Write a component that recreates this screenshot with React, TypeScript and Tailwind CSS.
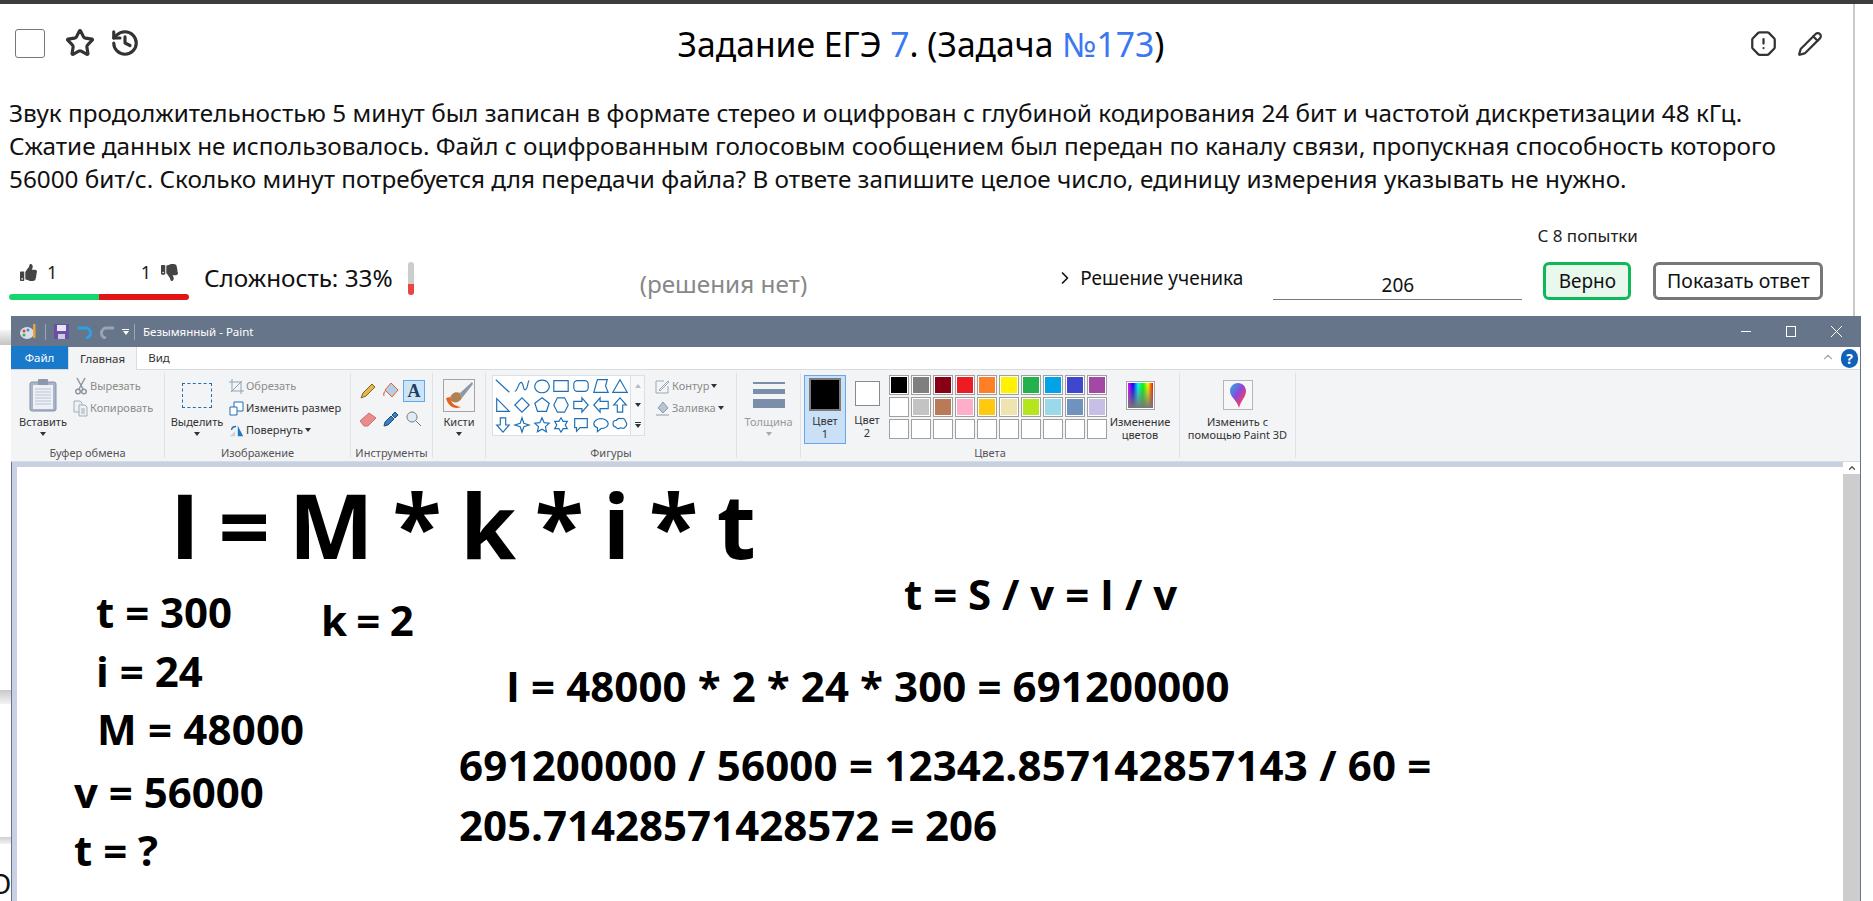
import { ChevronRight, ChevronUp, History, OctagonAlert, Pencil, Star } from "lucide-react";
import type { ReactNode } from "react";
import { FaThumbsDown, FaThumbsUp } from "react-icons/fa";

const PALETTE = [
	["#000000", "#7f7f7f", "#880015", "#ed1c24", "#ff7f27", "#fff200", "#22b14c", "#00a2e8", "#3f48cc", "#a349a4"],
	["#ffffff", "#c3c3c3", "#b97a57", "#ffaec9", "#ffc90e", "#efe4b0", "#b5e61d", "#99d9ea", "#7092be", "#c8bfe7"],
	["", "", "", "", "", "", "", "", "", ""],
];

const SHAPES = [
	"M2 3 17 17",
	"M2 16C5 16 6 6 9 6s2 10 5 8 2-9 4-10",
	"M10 3.5a8 7 0 1 0 .01 0Z",
	"M2 4h16v12H2Z",
	"M6 4h8a4 4 0 0 1 4 4v4a4 4 0 0 1-4 4H6a4 4 0 0 1-4-4V8a4 4 0 0 1 4-4Z",
	"M6 3h11l-2 7 3 7H2Z",
	"M10 3 18 17H2Z",
	"M3 3 17 17H3Z",
	"M10 2 18 10 10 18 2 10Z",
	"M10 2 18 8 15 17H5L2 8Z",
	"M6 2h8l4 8-4 8H6l-4-8Z",
	"M2 6h9V2l7 8-7 8v-4H2Z",
	"M18 6H9V2l-7 8 7 8v-4h9Z",
	"M10 2l7 8h-4v8H7v-8H3Z",
	"M7 2h6v8h4l-7 8-7-8h4Z",
	"M10 2l2 6 6 2-6 2-2 6-2-6-6-2 6-2Z",
	"M10 2l2.4 5.4 5.6.6-4.2 3.8 1.2 5.7L10 14.6 4.9 17.5l1.2-5.7L2 8l5.6-.6Z",
	"M10 2l2.3 4H17l-2.3 4 2.3 4h-4.7L10 18l-2.3-4H3l2.3-4L3 6h4.7Z",
	"M3 3h14v10H9l-4 4v-4H3Z",
	"M10 3c4.500 0 8 2.500 8 5.500S14.500 14 10 14l-4 3.500V13C3.500 12 2 10.500 2 8.500 2 5.500 5.500 3 10 3Z",
	"M6 5c1-2 3-3 5-2 2-1 5 0 5 3 2 1 2 5 0 6-1 2-3 2-5 1-2 2-5 1-6-1-3 0-4-5-1-7Z",
];

function Caret({ className = "border-t-[#333]" }: { className?: string }) {
	return <span className={`block h-0 w-0 border-x-[3px] border-t-[4px] border-x-transparent ${className}`} />;
}

function Group({ width, label, children }: { width: string; label: string; children: ReactNode }) {
	return (
		<div className={`${width} my-[3px] flex shrink-0 flex-col border-r border-[#dfe2e6]`}>
			<div className="flex h-[71px] pt-[2px]">{children}</div>
			<div className="mt-auto -mb-[2px] text-center text-[11px] leading-[15px] text-[#555]">{label}</div>
		</div>
	);
}

function BigButton({
	width,
	icon,
	lines,
	caret,
	muted,
}: {
	width: string;
	icon: ReactNode;
	lines: string[];
	caret?: boolean;
	muted?: boolean;
}) {
	return (
		<div className={`${width} flex shrink-0 flex-col items-center`}>
			<div className="flex h-[40px] items-center justify-center">{icon}</div>
			{lines.map((line) => (
				<div
					key={line}
					className={`whitespace-nowrap text-[11px] leading-[13px] ${muted ? "text-[#999]" : "text-[#333]"}`}
				>
					{line}
				</div>
			))}
			{caret && (
				<div className="mt-[4px]">
					<Caret className={muted ? "border-t-[#aaa]" : "border-t-[#333]"} />
				</div>
			)}
		</div>
	);
}

function SmallButton({ icon, label, muted, caret }: { icon: ReactNode; label: string; muted?: boolean; caret?: boolean }) {
	return (
		<div className={`flex h-[22px] items-center gap-[2px] text-[11px] ${muted ? "text-[#8c8c8c]" : "text-[#333]"}`}>
			<span className="flex w-[15px] justify-center">{icon}</span>
			<span className="whitespace-nowrap">{label}</span>
			{caret && <Caret />}
		</div>
	);
}

function PasteIcon() {
	return (
		<svg width="28" height="34" viewBox="0 0 28 34">
			<rect x="1" y="4" width="26" height="29" rx="2" fill="#a9b4c8" stroke="#8592a8" />
			<rect x="4" y="7" width="20" height="24" fill="#edf1f6" />
			<path d="M6 11h16M6 14h16M6 17h16M6 20h16M6 23h16M6 26h16" stroke="#b9c3d2" />
			<rect x="9" y="1" width="10" height="6" rx="1" fill="#8d98ac" />
		</svg>
	);
}

function ToolIcon({ d, fill, stroke }: { d: string; fill: string; stroke: string }) {
	return (
		<svg width="18" height="18" viewBox="0 0 18 18">
			<path d={d} fill={fill} stroke={stroke} strokeWidth="1" />
		</svg>
	);
}

function Clipboard() {
	return (
		<Group width="w-[154px]" label="Буфер обмена">
			<div className="w-[6px]" />
			<BigButton width="w-[52px]" icon={<PasteIcon />} lines={["Вставить"]} caret />
			<div className="ml-[4px] flex flex-col">
				<SmallButton
					muted
					label="Вырезать"
					icon={
						<svg width="12" height="18" viewBox="0 0 12 18" fill="none" stroke="#8d95a3" strokeWidth="1.500">
							<path d="M2 1l6 11M10 1 4 12" />
							<circle cx="3" cy="14.500" r="2.300" />
							<circle cx="9" cy="14.500" r="2.300" />
						</svg>
					}
				/>
				<SmallButton
					muted
					label="Копировать"
					icon={
						<svg width="15" height="17" viewBox="0 0 15 17" fill="#eef1f5" stroke="#a4adba">
							<path d="M1 1h6l2 2v9H1Z" />
							<path d="M6 5h6l2 2v9H6Z" />
							<path d="M8 9h4M8 11h4M8 13h4" />
						</svg>
					}
				/>
			</div>
		</Group>
	);
}

function ImageGroup() {
	return (
		<Group width="w-[186px]" label="Изображение">
			<div className="w-[2px]" />
			<BigButton
				width="w-[60px]"
				icon={<div className="h-[25px] w-[30px] border border-dashed border-[#1f6fb5]" />}
				lines={["Выделить"]}
				caret
			/>
			<div className="ml-[2px] flex flex-col">
				<SmallButton
					muted
					label="Обрезать"
					icon={
						<svg width="15" height="15" viewBox="0 0 15 15" fill="none" stroke="#8fa3b8">
							<path d="M3 0v12h12M0 3h12v12M2 13 13 2" />
						</svg>
					}
				/>
				<SmallButton
					label="Изменить размер"
					icon={
						<svg width="15" height="15" viewBox="0 0 15 15" fill="#fff" stroke="#1f6fb5">
							<path d="M5 1h9v9H5Z" />
							<path d="M1 6h7v8H1Z" />
						</svg>
					}
				/>
				<SmallButton
					caret
					label="Повернуть"
					icon={
						<svg width="17" height="15" viewBox="0 0 17 15">
							<path d="M1 14 7 8v6Z" fill="#c9d2dc" />
							<path d="M10 2v12h6Z" fill="#1f78bd" />
							<path d="M3 7c0-3 2-4 5-4" fill="none" stroke="#1f6fb5" strokeWidth="1.500" />
						</svg>
					}
				/>
			</div>
		</Group>
	);
}

function Tools() {
	return (
		<Group width="w-[82px]" label="Инструменты">
			<div className="ml-[6px] grid h-fit grid-cols-[repeat(3,22px)] grid-rows-[28px_28px] place-items-center gap-x-[1px] pt-[2px]">
				<ToolIcon d="M2 16l2-5L13 2l3 3-9 9Z" fill="#e8b548" stroke="#7d6430" />
				<ToolIcon d="M9 1l7 7-6 7-7-7ZM4 8c-2 2-3 4-2 6" fill="#b6cde6" stroke="#e2632a" />
				<div className="flex h-[22px] w-[22px] items-center justify-center border border-[#66a7e8] bg-[#cde4f7] font-['Liberation_Serif',serif] text-[18px] leading-none font-bold text-[#1f3e63]">
					A
				</div>
				<ToolIcon d="M1 11 10 3l7 5-8 8H5Z" fill="#ea8c8c" stroke="#c87070" />
				<ToolIcon d="M2 16l1-4 6-6 3 3-6 6ZM10 5l3-3 3 3-3 3Z" fill="#3c7fc0" stroke="#1d4e82" />
				<ToolIcon d="M7 2a5 5 0 1 0 .01 0ZM10.500 10.500 16 16" fill="#dfeaf5" stroke="#7d7466" />
			</div>
		</Group>
	);
}

function Brushes() {
	return (
		<Group width="w-[53px]" label="">
			<BigButton
				width="w-[52px]"
				icon={
					<div className="h-[33px] w-[32px] overflow-hidden border border-[#a5a5a5] bg-[#f4f4f4]">
						<svg width="30" height="31" viewBox="0 0 30 31">
							<path d="M2 18c2 8 8 12 15 9-7-1-10-4-11-10Z" fill="#e8601c" />
							<path d="M6 20C6 13 12 11 16 13l2 5c-3 5-8 6-12 2Z" fill="#b08252" />
							<path d="M16 13 28 2l1 2-11 14Z" fill="#8d99a8" />
						</svg>
					</div>
				}
				lines={["Кисти"]}
				caret
			/>
		</Group>
	);
}

function Shapes() {
	return (
		<Group width="w-[251px]" label="Фигуры">
			<div className="ml-[6px] flex h-[61px]">
				<div className="grid h-full w-[139px] grid-cols-7 grid-rows-3 place-items-center border border-[#dcdfe3] bg-white">
					{SHAPES.map((d) => (
						<svg key={d} width="18" height="18" viewBox="0 0 20 20" fill="none" stroke="#1f6fb5" strokeWidth="1.300">
							<path d={d} />
						</svg>
					))}
				</div>
				<div className="flex h-full w-[14px] flex-col items-center justify-around border-y border-r border-[#dcdfe3] bg-[#f7f8f9]">
					<span className="block h-0 w-0 border-x-[3px] border-b-[4px] border-x-transparent border-b-[#bbb]" />
					<Caret />
					<div className="flex flex-col items-center gap-[1px]">
						<div className="h-px w-[6px] bg-[#333]" />
						<Caret />
					</div>
				</div>
			</div>
			<div className="ml-[10px] flex flex-col">
				<SmallButton
					muted
					label="Контур"
					caret
					icon={
						<svg width="15" height="15" viewBox="0 0 15 15" fill="none" stroke="#9aa7b7">
							<path d="M1 2h8M1 2v12h12V7M4 11l9-9 1 1-9 9Z" />
						</svg>
					}
				/>
				<SmallButton
					muted
					label="Заливка"
					caret
					icon={
						<svg width="15" height="15" viewBox="0 0 15 15" fill="#b6c4d4" stroke="#8d9cad">
							<path d="M8 1l5 6-5 5-5-5ZM1 14h13" />
						</svg>
					}
				/>
			</div>
		</Group>
	);
}

function Thickness() {
	return (
		<Group width="w-[64px]" label="">
			<BigButton
				muted
				width="w-[63px]"
				icon={
					<div className="flex w-[32px] flex-col gap-[5px]">
						<div className="h-[2px] bg-[#7a8da9]" />
						<div className="h-[5px] bg-[#7a8da9]" />
						<div className="h-[9px] bg-[#7a8da9]" />
					</div>
				}
				lines={["Толщина"]}
				caret
			/>
		</Group>
	);
}

function Colors() {
	return (
		<Group width="w-[379px]" label="Цвета">
			<div className="ml-[3px] flex w-[42px] flex-col items-center border border-[#66a7e8] bg-[#c9e0f7] pt-[2px] pb-[1px]">
				<div className="mb-[3px] h-[33px] w-[32px] border-[2px] border-[#7a7a7a] bg-black" />
				<div className="text-[11px] leading-[13px] text-[#333]">Цвет</div>
				<div className="text-[11px] leading-[13px] text-[#333]">1</div>
			</div>
			<div className="ml-[8px] flex w-[26px] flex-col items-center pt-[6px]">
				<div className="mb-[7px] h-[25px] w-[25px] border border-[#8a8a8a] bg-white" />
				<div className="text-[11px] leading-[13px] text-[#333]">Цвет</div>
				<div className="text-[11px] leading-[13px] text-[#333]">2</div>
			</div>
			<div className="ml-[9px] grid h-fit grid-cols-[repeat(10,20px)] gap-[2px]">
				{PALETTE.flat().map((color, i) => (
					<div key={i} className="h-[20px] w-[20px] border border-[#a0a0a0] bg-white p-[1px]">
						{color && <div className="h-full w-full" style={{ backgroundColor: color }} />}
					</div>
				))}
			</div>
			<BigButton
				width="w-[66px]"
				icon={
					<div className="h-[29px] w-[29px] border border-[#a5a5a5] bg-white p-[1px]">
						<div className="h-full w-full bg-[linear-gradient(to_bottom,transparent,#777),linear-gradient(to_right,#f0f,#00f,#0ff,#0f0,#ff0,#f00)]" />
					</div>
				}
				lines={["Изменение", "цветов"]}
			/>
		</Group>
	);
}

function Paint3d() {
	return (
		<Group width="w-[116px]" label="">
			<BigButton
				width="w-[115px]"
				icon={
					<div className="flex h-[30px] w-[30px] items-center justify-center border border-[#b5b5b5] bg-[#f7f7f7]">
						<svg width="18" height="27" viewBox="0 0 18 27">
							<defs>
								<linearGradient id="paint3d" x1="0" y1="0" x2="1" y2="1">
									<stop offset="0" stopColor="#1fb4ef" />
									<stop offset="0.45" stopColor="#8a49d8" />
									<stop offset="0.75" stopColor="#ee3f72" />
									<stop offset="1" stopColor="#f8b21d" />
								</linearGradient>
							</defs>
							<path d="M9 1c5 0 8 4 8 8 0 6-5 9-7 17-2-8-9-11-9-17 0-4 3-8 8-8Z" fill="url(#paint3d)" />
						</svg>
					</div>
				}
				lines={["Изменить с", "помощью Paint 3D"]}
			/>
		</Group>
	);
}

function PaintWindow() {
	return (
		<div className="ml-[11px] flex w-[1850px] flex-1 flex-col border-r border-[#67758a] bg-white">
			<div className="flex h-[31px] shrink-0 items-center bg-[#67758a] text-white">
				<svg className="ml-[8px]" width="18" height="18" viewBox="0 0 18 18">
					<ellipse cx="8" cy="10" rx="7" ry="6" fill="#d9dee6" />
					<circle cx="5" cy="8" r="1.500" fill="#e0453a" />
					<circle cx="9" cy="7" r="1.500" fill="#3a8fe0" />
					<circle cx="5" cy="12" r="1.500" fill="#3fae5a" />
					<rect x="14" y="1" width="2.500" height="14" fill="#e8a33a" />
				</svg>
				<div className="ml-[8px] h-[16px] w-px bg-[#9aa4b3]" />
				<svg className="ml-[8px]" width="15" height="15" viewBox="0 0 15 15">
					<rect width="15" height="15" fill="#6a4fa3" />
					<rect x="3" y="1" width="9" height="6" fill="#e9e6f2" />
					<rect x="4" y="10" width="7" height="5" fill="#cfc8e2" />
				</svg>
				<svg className="ml-[8px]" width="15" height="15" viewBox="0 0 15 15" fill="none" stroke="#2ba2e8" strokeWidth="3">
					<path d="M1 4h7a5 5 0 0 1 1 10" />
				</svg>
				<svg className="ml-[8px]" width="15" height="15" viewBox="0 0 15 15" fill="none" stroke="#9aa4b3" strokeWidth="3">
					<path d="M14 4H7a5 5 0 0 0-1 10" />
				</svg>
				<div className="ml-[7px] flex flex-col items-center gap-[1px]">
					<div className="h-px w-[7px] bg-white" />
					<Caret className="border-t-white" />
				</div>
				<div className="ml-[5px] h-[16px] w-px bg-[#9aa4b3]" />
				<span className="ml-[8px] text-[11.5px]">Безымянный - Paint</span>
				<div className="ml-auto flex items-center">
					<div className="h-px w-[10px] bg-white" />
					<div className="ml-[35px] h-[11px] w-[10px] border border-white" />
					<svg className="mr-[18px] ml-[35px]" width="11" height="11" viewBox="0 0 11 11" stroke="#fff">
						<path d="M0 0l11 11M11 0 0 11" />
					</svg>
				</div>
			</div>
			<div className="flex h-[23px] shrink-0 items-end border-b border-[#dadbdc] text-[11.5px]">
				<div className="flex h-[23px] w-[57px] items-center justify-center bg-[#1979ca] text-white">Файл</div>
				<div className="-mb-px flex h-[23px] w-[69px] items-center justify-center border-x border-[#dadbdc] bg-[#f3f4f6] text-[#333]">
					Главная
				</div>
				<div className="flex h-[23px] w-[44px] items-center justify-center text-[#333]">Вид</div>
				<ChevronUp className="mr-[6px] mb-[5px] ml-auto text-[#aaa]" size={14} />
				<div className="mr-[2px] mb-[1px] flex h-[19px] w-[17px] items-center justify-center rounded-full bg-[#0f62b8] text-[14px] font-bold text-white">
					?
				</div>
			</div>
			<div className="flex h-[92px] shrink-0 border-b border-[#dadbdc] bg-[#f3f4f6]">
				<Clipboard />
				<ImageGroup />
				<Tools />
				<Brushes />
				<Shapes />
				<Thickness />
				<Colors />
				<Paint3d />
			</div>
			<div className="flex min-h-0 flex-1">
				<div className="w-[6px] shrink-0 border-l border-[#67758a] bg-[#c8d1e3]" />
				<div className="flex min-w-0 flex-1 flex-col">
					<div className="h-[5px] shrink-0 bg-[#c8d1e3]" />
					<div className="relative flex-1 bg-white font-['Open_Sans',sans-serif] leading-none font-bold whitespace-nowrap text-black">
						<div className="absolute top-[12px] left-[153px] text-[90px] tracking-[-2.3px]">I = M * k * i * t</div>
						<div className="absolute top-[124px] left-[79px] text-[42px]">t = 300</div>
						<div className="absolute top-[132px] left-[304px] text-[42px] tracking-[-0.8px]">k = 2</div>
						<div className="absolute top-[183px] left-[79px] text-[42px]">i = 24</div>
						<div className="absolute top-[241px] left-[80px] text-[42px] tracking-[0.2px]">M = 48000</div>
						<div className="absolute top-[304px] left-[57px] text-[42px]">v = 56000</div>
						<div className="absolute top-[362px] left-[57px] text-[42px]">t = ?</div>
						<div className="absolute top-[106px] left-[887px] text-[42px]">t = S / v = I / v</div>
						<div className="absolute top-[198px] left-[489px] text-[42px] tracking-[0.1px]">I = 48000 * 2 * 24 * 300 = 691200000</div>
						<div className="absolute top-[277px] left-[442px] text-[42px] tracking-[0.2px]">691200000 / 56000 = 12342.857142857143 / 60 =</div>
						<div className="absolute top-[337px] left-[442px] text-[42px]">205.71428571428572 = 206</div>
					</div>
				</div>
				<div className="flex w-[17px] shrink-0 flex-col bg-[#f0f0f0]">
					<div className="flex h-[12px] items-center justify-center bg-white">
						<ChevronUp size={10} strokeWidth={3} className="text-[#555]" />
					</div>
					<div className="flex-1 bg-[#cdcdcd]" />
				</div>
			</div>
		</div>
	);
}

export default function App() {
	return (
		<div className="relative flex h-[901px] w-full flex-col overflow-hidden bg-white font-['Noto_Sans',sans-serif] text-black">
			<div className="h-[4px] shrink-0 bg-[#3c3c3c]" />
			<div className="flex w-[1855px] shrink-0 flex-col border-r-[2px] border-[#c9c9c9]">
				<div className="grid h-[92px] grid-cols-[1fr_auto_1fr] items-start pt-[23px] pr-[30px] pl-[15px]">
					<div className="flex items-center pt-[1px] text-[#333]">
						<div className="h-[29px] w-[30px] rounded-[3px] border-[1.5px] border-[#777]" />
						<Star className="ml-[20px]" size={30} strokeWidth={2.5} />
						<History className="ml-[15px]" size={30} strokeWidth={2.5} />
					</div>
					<div className="pl-[4px] text-[33.7px] leading-[34px] whitespace-nowrap">
						Задание ЕГЭ <span className="text-[#3b78f0]">7</span>. (Задача <span className="text-[#3b78f0]">№173</span>)
					</div>
					<div className="flex items-center justify-end gap-[20px] pt-[3px] text-[#333]">
						<OctagonAlert size={27} strokeWidth={2} />
						<Pencil size={26} strokeWidth={2} />
					</div>
				</div>
				<p className="pl-[9px] text-[24.3px] leading-[33px] whitespace-nowrap text-[#111]">
					Звук продолжительностью 5 минут был записан в формате стерео и оцифрован с глубиной кодирования 24 бит и частотой дискретизации 48 кГц.
					<br />
					Сжатие данных не использовалось. Файл с оцифрованным голосовым сообщением был передан по каналу связи, пропускная способность которого
					<br />
					56000 бит/с. Сколько минут потребуется для передачи файла? В ответе запишите целое число, единицу измерения указывать не нужно.
				</p>
				<div className="flex h-[121px] items-end pb-[16px] pl-[9px]">
					<div className="w-[180px] shrink-0">
						<div className="flex h-[34px] items-start justify-between px-[11px] text-[18px] leading-[24px] text-[#222]">
							<div className="flex items-center gap-[10px]">
								<FaThumbsUp size={17} className="text-[#444]" />1
							</div>
							<div className="flex items-center gap-[10px]">
								1<FaThumbsDown size={17} className="text-[#444]" />
							</div>
						</div>
						<div className="flex h-[6px] overflow-hidden rounded-[3px]">
							<div className="w-1/2 bg-[#16d670]" />
							<div className="w-1/2 bg-[#e01616]" />
						</div>
					</div>
					<div className="mb-[6px] ml-[15px] text-[24.3px] leading-[32px] whitespace-nowrap text-[#111]">Сложность: 33%</div>
					<div className="mb-[5px] ml-[15px] flex h-[33px] w-[6px] flex-col justify-end overflow-hidden rounded-[3px] bg-[#cccccc]">
						<div className="h-[11px] bg-[#e84545]" />
					</div>
					<div className="ml-[226px] text-[24.3px] leading-[32px] whitespace-nowrap text-[#888]">(решения нет)</div>
					<div className="mb-[8px] ml-[248px] flex items-center text-[#111]">
						<ChevronRight size={20} strokeWidth={2} />
						<span className="ml-[5px] text-[19px] leading-[28px] whitespace-nowrap">Решение ученика</span>
					</div>
					<div className="ml-[30px] w-[249px] border-b border-[#777] text-center text-[19px] leading-[28px] text-[#111]">206</div>
					<div className="ml-[21px] flex w-[88px] flex-col">
						<div className="relative flex h-[38px] items-center justify-center rounded-[6px] border-[3px] border-[#0fb856] bg-[#e8f8ed] text-[19px] text-[#111]">
							Верно
							<span className="absolute -top-[40px] -left-[9px] text-[17px] leading-[22px] whitespace-nowrap text-[#222]">С 8 попытки</span>
						</div>
					</div>
					<div className="ml-[22px] flex h-[38px] w-[170px] items-center justify-center rounded-[6px] border-[3px] border-[#777] bg-white text-[19.5px] whitespace-nowrap text-[#111]">
						Показать ответ
					</div>
				</div>
			</div>
			<PaintWindow />
			<div className="absolute top-[330px] left-0 h-[15px] w-[11px] bg-gradient-to-b from-[#f5f5f5] to-[#c4c4c4]" />
			<div className="absolute top-[690px] left-0 h-[14px] w-[11px] bg-gradient-to-b from-[#c9c9c9] to-[#f3f3f3]" />
			<div className="absolute top-[837px] left-0 h-[7px] w-[11px] bg-gradient-to-b from-[#d0d0d0] to-[#f3f3f3]" />
			<div className="absolute top-[866px] left-[-10px] w-[21px] overflow-hidden text-[28px] leading-[34px] text-[#111]">О</div>
		</div>
	);
}
